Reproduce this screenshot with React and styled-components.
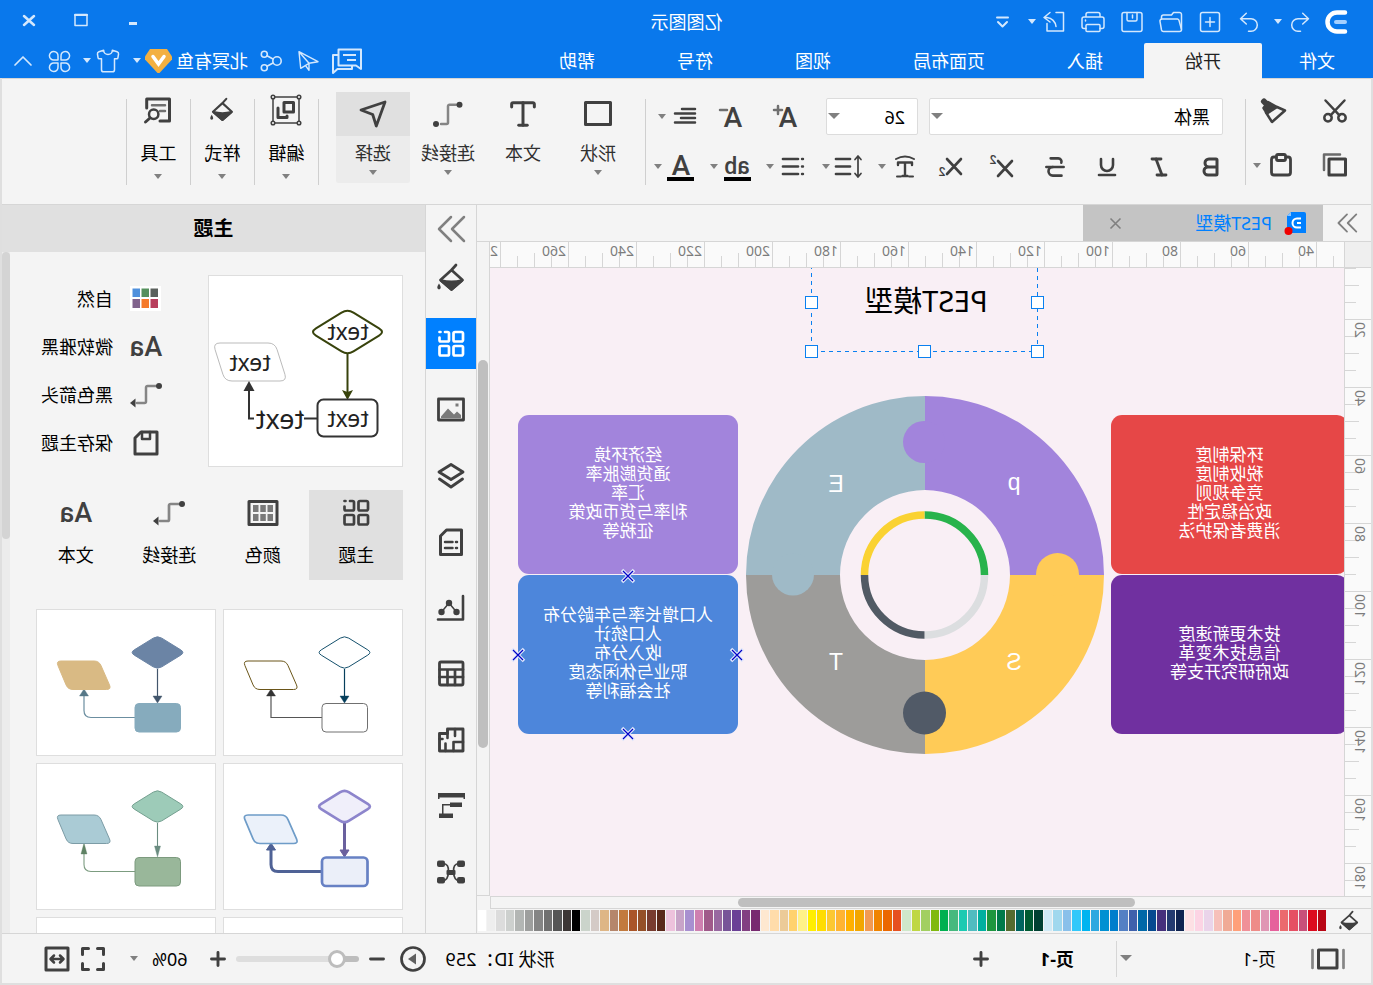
import React from "react";
import styled, { createGlobalStyle, css } from "styled-components";
import { Bold, Italic, Shirt, Strikethrough, Type, Underline } from "lucide-react";

const INK = "#404040";
const LINE = "#d6d6d6";

const GlobalStyle = createGlobalStyle`
  * { box-sizing: border-box; }
  body {
    margin: 0;
    overflow: hidden;
    font-family: "Noto Sans", "Noto Sans CJK SC", sans-serif;
    font-size: 18px;
    line-height: 26px;
    color: #000;
  }
  button, input, select { font: inherit; color: inherit; }
  button { border: 0; padding: 0; background: none; }
`;

/* The whole window is shown flipped from left to right. */
const Window = styled.div`
  display: flex;
  flex-direction: column;
  height: 100vh;
  background: #f4f4f4;
  transform: scaleX(-1);
`;

/* ---------- icons ---------- */

const Svg = styled.svg`
  display: block;
  flex: none;
  width: ${(p) => p.$w}px;
  height: ${(p) => p.$h}px;
  overflow: visible;
`;

const GlyphText = styled.text`
  font-family: ${(p) => (p.$weight ? "Roboto" : '"Liberation Sans"')}, sans-serif;
  font-size: ${(p) => p.$size}px;
  font-weight: ${(p) => p.$weight || 400};
  fill: ${(p) => p.$fill || "currentColor"};
  stroke: none;
  text-anchor: middle;
`;

const icons = {
  undo: <path d="M11.3 5.3 5.5 10.7l5.8 5.3M5.5 10.7H16a6.3 6.3 0 0 1 0 12.6h-2.5" />,
  redo: <path d="M16.7 5.3l5.8 5.4-5.8 5.3M22.5 10.7H12a6.3 6.3 0 0 0 0 12.6h2.5" />,
  add: <><rect x="4.5" y="4.5" width="19" height="19" rx="2" /><path d="M14 9.5v9M9.5 14h9" /></>,
  folder: <><path d="M3.5 21V6.5a2 2 0 0 1 2-2h6l2 2.5h8a2 2 0 0 1 2 2v2" /><path d="M7.5 11H23a2 2 0 0 1 2 2.4l-1.5 8.6a2 2 0 0 1-2 1.5h-16a2 2 0 0 1-2-2L6 12.4A2 2 0 0 1 7.5 11z" /></>,
  save: <><rect x="4" y="4.5" width="20" height="19" rx="2" /><path d="M9 4.5v7a1.5 1.5 0 0 0 1.5 1.5h7a1.5 1.5 0 0 0 1.5-1.5v-7M13.5 7v3" /></>,
  print: <><path d="M7 9V6.5a2 2 0 0 1 2-2h10a2 2 0 0 1 2 2V9M7 20.5H5a2 2 0 0 1-2-2V11a2 2 0 0 1 2-2h18a2 2 0 0 1 2 2v7.5a2 2 0 0 1-2 2h-2" /><rect x="7" y="16.5" width="14" height="7" rx="1" /><path d="M21.5 12v1" /></>,
  exportFile: <><path d="M12 4.5H4.5V23H21v-7.5" /><path d="M18 4.5l6 5-6 4.5M24 9.5h-3a10 10 0 0 0-9 9" /></>,
  more: <><path d="M9 9.5h11" strokeWidth="2" /><path d="M10 14l4.5 4.5L19 14" strokeWidth="2" /></>,
  minimize: <path d="M10 15.5h8" strokeWidth="3" strokeLinecap="butt" />,
  maximize: <><rect x="8" y="6.5" width="12" height="11" /><path d="M8 7h12" strokeWidth="2" /></>,
  close: <path d="M9 8l10 9M19 8L9 17" strokeWidth="2.5" />,
  send: <path d="M23 4.7L4 14.7l9 1.6zM23 4.7l-1.7 16.600-8.3-5M13 16.3v7l3.5-4.8" />,
  share: <><circle cx="20.7" cy="7.3" r="3" /><circle cx="20.7" cy="20.7" r="3" /><circle cx="8" cy="14" r="4.2" /><path d="M12 12l6-3.2M12 16l6 3.2" /></>,
  clover: <path d="M13 13H9a4.3 4.3 0 1 1 4-4zM16 13V9a4.3 4.3 0 1 1 4 4zM13 16H9a4.3 4.3 0 1 0 4 4zM16 16v4a4.3 4.3 0 1 0 4-4z" />,
  up: <path d="M6 18l8-8 8 8" />,
  cut: <><circle cx="7" cy="20.7" r="3.7" /><circle cx="21" cy="20.7" r="3.7" /><path d="M4.5 3.5l14 14.8M23.5 3.5l-14 14.8" /></>,
  painter: <><path d="M11 10l-8 3.5L16 25l6-9.5" /><path d="M20 5l4.500 6-3.5 5.5L11 10z" fill="currentColor" /><path d="M24 4.5l-5 5" strokeWidth="6" /></>,
  copy: <><rect x="3.5" y="8" width="16.5" height="16" strokeWidth="3" /><path d="M9 3.500h16V19" stroke="#6a6a6a" /></>,
  paste: <><rect x="4.5" y="6" width="19" height="18" rx="2.5" /><rect x="9.5" y="3.5" width="9" height="6" rx="1.5" fill="#f4f4f4" /></>,
  fontUp: <><GlyphText $size={28} $weight="500" x="12" y="24">A</GlyphText><path d="M22 3v8M18 7h8" stroke="#707070" /></>,
  fontDown: <><GlyphText $size={28} $weight="500" x="12" y="24">A</GlyphText><path d="M18 7h7" stroke="#707070" /></>,
  align: <path d="M4 6h13M4 10.500h20M4 15h14M4 19.500h20" strokeWidth="2.500" />,
  sup: <><path d="M5 8l14 15M19 8L5 23" strokeWidth="2.600" /><GlyphText $size={12} $weight="500" x="24" y="11">2</GlyphText></>,
  sub: <><path d="M4 6l14 15M18 6L4 21" strokeWidth="2.600" /><GlyphText $size={12} $weight="500" x="23" y="23">2</GlyphText></>,
  spacing: <><path d="M13 6h14M13 13.500h14M13 21h14" strokeWidth="2.700" /><path d="M5 3v21M2 6.500L5 3l3 3.500M2 20.500L5 24l3-3.500" strokeWidth="1.700" /></>,
  list: <><path d="M9 6h15M9 13.500h15M9 21h15" strokeWidth="2.700" /><path d="M4 6h1M4 13.500h1M4 21h1" strokeWidth="2.400" /></>,
  highlight: <><GlyphText $size={23} $weight="500" x="14" y="21">ab</GlyphText><path d="M0 26h27" stroke="#000" strokeWidth="4" strokeLinecap="butt" /></>,
  fontColor: <><GlyphText $size={28} $weight="500" x="14" y="22">A</GlyphText><path d="M1 26h27" stroke="#000" strokeWidth="4" strokeLinecap="butt" /></>,
  textEffect: <><path d="M5 6q9-5 18 0M6 23.500h4M18 23.500h4" /><path d="M7 12V9.500h14V12M14 9.500v13.500M11.500 23h5" strokeWidth="2.400" /></>,
  shape: <rect x="1.500" y="2.500" width="25" height="22" strokeWidth="3" />,
  connector: <><path d="M6 4.700h6.500a1.500 1.500 0 0 1 1.500 1.500v16.300a1.500 1.500 0 0 0 1.500 1.500H21" stroke="#858585" /><circle cx="2.500" cy="4.700" r="3" fill="currentColor" stroke="none" /><circle cx="26" cy="24" r="3" fill="currentColor" stroke="none" /></>,
  arrowConnector: <><path d="M4 5h8.500A1.500 1.500 0 0 1 14 6.500v14a1.500 1.500 0 0 0 1.500 1.500H23" stroke="#858585" /><circle cx="1" cy="5" r="3" fill="currentColor" stroke="none" /><path d="M24.500 17.500v9l5.500-4.500z" fill="currentColor" stroke="none" /></>,
  pointer: <path d="M26 10L2 2l8.700 24 3.600-11.500z" strokeWidth="2.800" />,
  edit: <><path d="M1 1h26v26H1z" strokeWidth="1.500" /><g fill="#f4f4f4" strokeWidth="1.500"><circle cx="1" cy="1" r="1.800" /><circle cx="27" cy="1" r="1.800" /><circle cx="1" cy="27" r="1.800" /><circle cx="27" cy="27" r="1.800" /></g><path d="M6.500 6.500H16V16H6.500zM22 12v9.500h-9V20" strokeWidth="3" /></>,
  bucket: <><path d="M9 1l4.500 5L2.500 16l11 9.500L24.500 16l-11-10" /><path d="M3 16.500q10.500 2.500 21 0l-10.500 9z" fill="currentColor" /><path d="M26 19.500q3.500 5 0 6-3.500-1 0-6z" fill="currentColor" stroke="none" /></>,
  tools: <><path d="M25.300 12V3H2.500v22h9.500" strokeWidth="3" /><path d="M7 9.300h13M7 15h5" stroke="#707070" /><circle cx="18.300" cy="18.300" r="4.700" /><path d="M22 22l4.500 4" strokeWidth="3" /></>,
  theme: <><rect x="2" y="2" width="9.500" height="9.500" rx="1.500" /><rect x="2" y="16" width="9.500" height="9.500" rx="1.500" /><rect x="16" y="16" width="9.500" height="9.500" rx="1.500" /><path d="M20 2h-2.500A1.500 1.500 0 0 0 16 3.500V10a1.500 1.500 0 0 0 1.500 1.500H24A1.500 1.500 0 0 0 25.500 10V7.500M24.500 2h1" /></>,
  image: <><rect x="1.500" y="3" width="25" height="21" strokeWidth="2.800" /><path d="M4 22v-3l4-3.500 3 3 6-6 7 8V22z" fill="#7a7a7a" stroke="none" /><path d="M6.500 7.500h3v3h-3z" fill="#7a7a7a" stroke="none" /></>,
  layers: <path d="M14 2.500L26 10l-12 7.500L2 10zM2.500 17L14 25l11.500-8" strokeWidth="2.900" />,
  doc: <><path d="M3.500 2h15l6 6v18.500h-21z" strokeWidth="3" /><path d="M8 14h1M8 20h1M12.500 14H20M12.500 20H20" strokeWidth="2.500" /></>,
  chart: <><path d="M2 2v23.500h25" strokeWidth="2.600" /><path d="M8.500 18L16 9l7.500 9" strokeWidth="1.500" /><g fill="currentColor" stroke="none"><circle cx="8.500" cy="18" r="3.200" /><circle cx="16" cy="9" r="3.200" /><circle cx="23.500" cy="18" r="3.200" /></g></>,
  table: <><rect x="2" y="2" width="23.500" height="23" rx="1.500" strokeWidth="2.800" /><path d="M2 9.500h23.500M2 17h23.500M10 9.500V25M17.500 9.500V25" /></>,
  plan: <><path d="M2 3h15.500v4.500H25.500v17.500H2z" strokeWidth="2.900" /><path d="M10 3v7M2 16h7M9 16h2.500v9M17.500 7.500V12M19.500 25v-7.500M25.500 13h-3" strokeWidth="2.600" /></>,
  gantt: <g fill="currentColor" stroke="none"><path d="M0 1h27v6h-1.500V5.500h-24V7H0z" /><rect x="3" y="10.500" width="12" height="4.500" /><rect x="12" y="21.500" width="14" height="4.500" /><path d="M15 12h8v10h-1.500v-8.500H15z" /></g>,
  mind: <><path d="M6 5.500q6 0 5.500 8.500T6 22.500M22 5.500q-6 0-5.500 8.500t5.500 8.500" strokeWidth="1.700" /><g fill="currentColor" stroke="none"><rect x="0" y="2.500" width="8" height="6.500" rx="2" /><rect x="20" y="2.500" width="8" height="6.500" rx="2" /><rect x="0" y="19" width="8" height="6.500" rx="2" /><rect x="20" y="19" width="8" height="6.500" rx="2" /><rect x="9.500" y="12" width="9" height="5" rx="1" /></g></>,
  collapse: <path d="M1 2l12 12L1 26M14 2l12 12-12 12" stroke="#808080" />,
  palette: <><rect x="0" y="2.500" width="28" height="23" strokeWidth="3" /><g fill="#7a7a7a" stroke="none"><path d="M4 6h5.500v7H4zM11.200 6h5.500v7h-5.500zM18.500 6H24v7h-5.500zM4 15h5.500v7H4zM11.200 15h5.500v7h-5.500zM18.500 15H24v7h-5.500z" /></g></>,
  swatches: <><rect x="-1" y="1" width="31" height="25" fill="#fff" stroke="none" /><g stroke="none"><path fill="#5a605c" d="M2 3.500h7.500V12H2z" /><path fill="#55905c" d="M11 3.500h7.500V12H11z" /><path fill="#4f90dc" d="M20 3.500h7.500V12H20z" /><path fill="#b83e5c" d="M2 14h7.500v9H2z" /><path fill="#f57a2a" d="M11 14h7.500v9H11z" /><path fill="#80638c" d="M20 14h7.500v9H20z" /></g></>,
  aa: <GlyphText $size={27} $weight="500" x="14" y="23">Aa</GlyphText>,
  saveTheme: <><path d="M3 3h16l6 6v16H3z" strokeWidth="3" /><path d="M10 3v7h8V3" strokeWidth="2.500" /></>,
  pages: <><rect x="5" y="5" width="18.500" height="18" strokeWidth="3" /><path d="M-1.500 5v18M29.500 5v18" stroke="#858585" strokeWidth="2.700" /></>,
  plus: <path d="M14 7.500v13M7.500 14h13" strokeWidth="2.900" />,
  minus: <path d="M7.500 14h13" strokeWidth="2.900" />,
  play: <><circle cx="14" cy="14" r="11.500" strokeWidth="2.700" /><path d="M11 8.500v11l8-5.500z" fill="#606060" stroke="none" /></>,
  full: <path d="M3.500 9.500V3.500h6M18.500 3.500h6v6M24.500 18.500v6h-6M9.500 24.500h-6v-6" strokeWidth="3" />,
  fit: <><rect x="3" y="3" width="22" height="22" strokeWidth="3" /><path d="M8 14h12M11 10.500L7.500 14l3.500 3.500M17 10.500l3.500 3.500-3.500 3.500" /></>,
};

const Icon = ({ name, size = 28, weight = 2.5 }) => (
  <Svg $w={size} $h={size} viewBox="0 0 28 28" fill="none" stroke="currentColor" strokeWidth={weight} strokeLinecap="round" strokeLinejoin="round" aria-hidden="true">
    {icons[name]}
  </Svg>
);

const Caret = styled.span`
  flex: none;
  width: 0;
  height: 0;
  border: 4px solid transparent;
  border-top: 5px solid ${(p) => p.$color || "#808080"};
  border-bottom: 0;
`;

/* ---------- header ---------- */

const Header = styled.header`
  flex: none;
  background: #0978ec;
  color: #d4e8fd;
`;
const TitleRow = styled.div`
  display: grid;
  grid-template-columns: 1fr auto 1fr;
  align-items: center;
  height: 43px;
`;
const QuickBar = styled.div`
  display: flex;
  align-items: center;
  gap: 11px;
  padding-left: 26px;
`;
const IconButton = styled.button`
  display: flex;
  align-items: center;
  justify-content: center;
  gap: ${(p) => p.$gap || 4}px;
`;
const AppTitle = styled.h1`
  margin: 0;
  font-size: 18px;
  font-weight: 400;
  color: #fff;
`;
const WindowButtons = styled.div`
  display: flex;
  justify-content: flex-end;
  padding-right: 3px;
`;
const WindowButton = styled.button`
  display: flex;
  justify-content: center;
  width: 52px;
`;
const MenuRow = styled.div`
  display: flex;
  justify-content: space-between;
  height: 35px;
`;
const Tabs = styled.nav`
  display: flex;
`;
const Tab = styled.button`
  position: relative;
  height: ${(p) => (p.$active ? 36 : 35)}px;
  padding: 0 41px;
  border-radius: 2px 2px 0 0;
  color: ${(p) => (p.$active ? "#222" : "#fff")};
  background: ${(p) => (p.$active ? "#f4f4f4" : "transparent")};
  &:first-child { padding: 0 37px 0 38px; }
`;
const Account = styled.div`
  display: flex;
  align-items: center;
  gap: 9px;
  padding-right: 9px;
`;
const SkinButton = styled(IconButton)`
  margin-left: 3px;
`;
const UserName = styled.span`
  color: #fff;
`;

const Logo = () => (
  <Svg $w={22} $h={24} viewBox="0 0 22 24" fill="none" strokeLinecap="round">
    <path d="M2 2.500h8a9.500 9.500 0 0 1 0 19H2" stroke="#fff" strokeWidth="4.500" />
    <path d="M2 12h9" stroke="#a5d0ff" strokeWidth="4" />
  </Svg>
);
const Vip = () => (
  <Svg $w={27} $h={24} viewBox="0 0 27 24">
    <path d="M5 0h17l5 7.500v3L14.500 24h-2L0 10.500v-3z" fill="#f3b041" />
    <path d="M8 7.500l5.500 7.500 5.500-7.500" fill="none" stroke="#fff" strokeWidth="3.500" strokeLinecap="round" />
  </Svg>
);
const Chat = () => (
  <Svg $w={32} $h={32} viewBox="0 0 32 32" fill="none" stroke="currentColor" strokeWidth="2" strokeLinejoin="round">
    <path d="M2 24V4.500h22.500v16H7z" />
    <path d="M24.500 10H30v18l-4.500-4H11v-3.500M7 10h13M7 15h9" />
  </Svg>
);

const quick = ["add", "folder", "save", "print"];
const menus = ["文件", "开始", "插入", "页面布局", "视图", "符号", "帮助"];

const AppHeader = () => (
  <Header>
    <TitleRow>
      <QuickBar>
        <Logo />
        <IconButton aria-label="undo"><Icon name="undo" weight={1.5} /><Caret $color="#d4e8fd" /></IconButton>
        <IconButton aria-label="redo"><Icon name="redo" weight={1.5} /></IconButton>
        {quick.map((n) => <IconButton key={n} aria-label={n}><Icon name={n} weight={1.5} /></IconButton>)}
        <IconButton aria-label="export"><Icon name="exportFile" weight={1.5} /><Caret $color="#d4e8fd" /></IconButton>
        <IconButton aria-label="more"><Icon name="more" /></IconButton>
      </QuickBar>
      <AppTitle>亿图图示</AppTitle>
      <WindowButtons>
        <WindowButton aria-label="minimize"><Icon name="minimize" /></WindowButton>
        <WindowButton aria-label="maximize"><Icon name="maximize" weight={1.5} /></WindowButton>
        <WindowButton aria-label="close"><Icon name="close" /></WindowButton>
      </WindowButtons>
    </TitleRow>
    <MenuRow>
      <Tabs>
        {menus.map((m) => <Tab key={m} $active={m === "开始"}>{m}</Tab>)}
      </Tabs>
      <Account>
        <IconButton aria-label="comments"><Chat /></IconButton>
        <IconButton aria-label="send"><Icon name="send" weight={1.4} /></IconButton>
        <IconButton aria-label="share"><Icon name="share" weight={1.6} /></IconButton>
        <IconButton><UserName>北冥有鱼</UserName><Vip /><Caret $color="#d4e8fd" /></IconButton>
        <SkinButton aria-label="skin"><Shirt size={26} strokeWidth={1.4} /><Caret $color="#d4e8fd" /></SkinButton>
        <IconButton aria-label="apps"><Icon name="clover" weight={1.5} /></IconButton>
        <IconButton aria-label="collapse"><Icon name="up" weight={1.7} /></IconButton>
      </Account>
    </MenuRow>
  </Header>
);

/* ---------- ribbon ---------- */

const Body = styled.div`
  flex: 1;
  min-height: 0;
  display: flex;
  flex-direction: column;
  border: solid #dfdfdf;
  border-width: 0 2px 2px;
`;
const RibbonBar = styled.section`
  flex: none;
  display: flex;
  height: 127px;
  border-top: 1px solid ${LINE};
  border-bottom: 1px solid ${LINE};
  color: ${INK};
`;
const Separator = styled.div`
  flex: none;
  width: 1px;
  height: 86px;
  margin-top: 20px;
  background: #cfcfcf;
`;
const Clipboard = styled.div`
  display: grid;
  grid-template-columns: 66px 56px;
  grid-auto-rows: 54px;
  padding: 5px 0 0 3px;
`;
const FontGroup = styled.div`
  display: flex;
  flex-direction: column;
  gap: 13px;
  padding: 19px 8px 0;
`;
const FontRow = styled.div`
  display: flex;
  align-items: center;
  height: 37px;
  padding-left: ${(p) => p.$inset || 0}px;
`;
const SelectBox = styled.label`
  position: relative;
  display: block;
  width: ${(p) => p.$width}px;
  margin-right: 11px;
  select {
    appearance: none;
    display: block;
    width: 100%;
    height: 37px;
    padding: 0 12px;
    border: 1px solid #dcdcdc;
    border-radius: 2px;
    background: #fff;
    color: #000;
  }
  ${Caret} {
    position: absolute;
    right: 2px;
    top: 15px;
    border-width: 6px 6px 0;
  }
`;
const Tool = styled(IconButton)`
  width: ${(p) => p.$width}px;
`;
const Combos = styled.div`
  display: flex;
  gap: 14px;
  padding-left: 5px;
`;
const Combo = styled(IconButton)`
  width: 42px;
  gap: 5px;
`;
const BigTools = styled.div`
  display: flex;
  gap: 1px;
  padding: 13px 17px 0 10px;
`;
const BigTool = styled.button`
  display: flex;
  flex-direction: column;
  align-items: center;
  gap: ${(p) => (p.$menu ? 8 : 4)}px;
  width: ${(p) => p.$width || 74}px;
  height: 91px;
  margin-top: ${(p) => (p.$menu ? 9 : 0)}px;
  border-radius: 2px;
  background: ${(p) => (p.$active ? "#ececec" : "transparent")};
`;
const BigIcon = styled.span`
  display: flex;
  align-items: center;
  justify-content: center;
  align-self: stretch;
  height: 44px;
  background: ${(p) => (p.$active ? "#e0e0e0" : "transparent")};
`;
const BigLabel = styled.span`
  color: ${(p) => (p.$dark ? "#000" : "#303030")};
`;

const Ribbon = () => (
  <RibbonBar>
    <Clipboard>
      <IconButton aria-label="cut"><Icon name="cut" /></IconButton>
      <IconButton aria-label="format painter"><Icon name="painter" /></IconButton>
      <IconButton aria-label="copy"><Icon name="copy" /></IconButton>
      <IconButton aria-label="paste" $gap={6}><Icon name="paste" weight={2.8} /><Caret /></IconButton>
    </Clipboard>
    <Separator />
    <FontGroup>
      <FontRow $inset={14}>
        <SelectBox $width={294}><select aria-label="font"><option>黑体</option></select><Caret /></SelectBox>
        <SelectBox $width={92}><select aria-label="size"><option>26</option></select><Caret /></SelectBox>
        <Tool $width={58} aria-label="grow font"><Icon name="fontUp" /></Tool>
        <Tool $width={52} aria-label="shrink font"><Icon name="fontDown" /></Tool>
        <Combos><Combo aria-label="align"><Icon name="align" /><Caret /></Combo></Combos>
      </FontRow>
      <FontRow>
        <Tool $width={52} aria-label="bold"><Bold size={24} strokeWidth={3} /></Tool>
        <Tool $width={52} aria-label="italic"><Italic size={24} strokeWidth={2.8} /></Tool>
        <Tool $width={52} aria-label="underline"><Underline size={24} strokeWidth={2.6} /></Tool>
        <Tool $width={52} aria-label="strike"><Strikethrough size={26} strokeWidth={2.4} /></Tool>
        <Tool $width={52} aria-label="superscript"><Icon name="sup" /></Tool>
        <Tool $width={52} aria-label="subscript"><Icon name="sub" /></Tool>
        <Combos>
          {["textEffect", "spacing", "list", "highlight", "fontColor"].map((n) => (
            <Combo key={n} aria-label={n}><Icon name={n} weight={2} /><Caret /></Combo>
          ))}
        </Combos>
      </FontRow>
    </FontGroup>
    <Separator />
    <BigTools>
      <BigTool><BigIcon><Icon name="shape" /></BigIcon><BigLabel>形状</BigLabel><Caret /></BigTool>
      <BigTool><BigIcon><Type size={34} strokeWidth={2.1} /></BigIcon><BigLabel>文本</BigLabel></BigTool>
      <BigTool><BigIcon><Icon name="connector" /></BigIcon><BigLabel>连接线</BigLabel><Caret /></BigTool>
      <BigTool $active><BigIcon $active><Icon name="pointer" /></BigIcon><BigLabel>选择</BigLabel><Caret /></BigTool>
    </BigTools>
    {[["edit", "编辑"], ["bucket", "样式"], ["tools", "工具"]].map(([icon, label]) => (
      <React.Fragment key={label}>
        {label !== "编辑" || <Separator />}
        <BigTool $menu $width={63}><BigIcon><Icon name={icon} size={icon === "bucket" ? 24 : 28} /></BigIcon><BigLabel $dark>{label}</BigLabel><Caret /></BigTool>
        <Separator />
      </React.Fragment>
    ))}
  </RibbonBar>
);

/* ---------- editor ---------- */

const Main = styled.main`
  flex: 1;
  min-height: 0;
  display: flex;
`;
const Editor = styled.section`
  flex: 1;
  min-width: 0;
  display: flex;
  flex-direction: column;
`;
const DocTabs = styled.div`
  flex: none;
  display: flex;
  align-items: center;
  height: 37px;
  border-bottom: 1px solid ${LINE};
  color: ${INK};
`;
const Expand = styled.button`
  display: flex;
  justify-content: center;
  width: 48px;
`;
const DocTab = styled.div`
  display: flex;
  align-items: center;
  gap: 14px;
  width: 240px;
  height: 36px;
  padding: 0 27px 0 17px;
  background: #c4c4c4;
  color: #0080ff;
  button { margin-left: auto; color: #808080; }
`;
const Board = styled.div`
  flex: 1;
  min-height: 0;
  display: grid;
  grid-template-columns: 27px 1fr 13px;
  grid-template-rows: 26px 1fr 13px;
`;
const Corner = styled.div`
  background: #efefef;
  border: solid ${LINE};
  border-width: 0 1px 1px 0;
`;
const Ruler = styled.div`
  display: flex;
  overflow: hidden;
  background: #fafafa;
  border: 0 solid ${LINE};
  ${(p) => p.$vertical
    ? css`flex-direction: column; border-right-width: 1px;`
    : css`border-bottom-width: 1px;`}
`;
const Segment = styled.div`
  flex: none;
  position: relative;
  display: flex;
  border: 0 solid ${LINE};
  ${(p) => p.$vertical
    ? css`
      height: 68px;
      flex-direction: column;
      justify-content: space-evenly;
      align-items: flex-end;
      border-top-width: 1px;
      &:first-child { margin-top: -17px; }
    `
    : css`
      width: 68px;
      justify-content: space-evenly;
      align-items: flex-end;
      border-left-width: 1px;
      &:first-child { margin-left: -41px; }
    `}
`;
const Tick = styled.i`
  background: ${LINE};
  width: ${(p) => (p.$vertical ? (p.$long ? 14 : 11) : 1)}px;
  height: ${(p) => (p.$vertical ? 1 : p.$long ? 14 : 11)}px;
`;
const Mark = styled.span`
  position: absolute;
  font-size: 14px;
  line-height: 16px;
  color: #7c7c7c;
  ${(p) => p.$vertical
    ? css`top: 2px; left: 3px; writing-mode: vertical-rl; transform: rotate(180deg);`
    : css`top: 1px; left: 2px;`}
`;
/* The first segment only carries ticks: its number lies outside the view. */
const Scale = ({ vertical, from, count }) => (
  <Ruler $vertical={vertical}>
    {Array.from({ length: count }, (_, i) => (
      <Segment key={i} $vertical={vertical}>
        {i > 0 && <Mark $vertical={vertical}>{from + i * 20}</Mark>}
        <Tick $vertical={vertical} /><Tick $vertical={vertical} $long /><Tick $vertical={vertical} />
      </Segment>
    ))}
  </Ruler>
);
const VScroll = styled.div`
  grid-column: 3;
  grid-row: 1 / 3;
  padding: 118px 1px 0;
  border: solid ${LINE};
  border-width: 0 0 1px 1px;
`;
const HScroll = styled.div`
  grid-column: 1 / 3;
  padding: 1px 0 0 236px;
  border: solid ${LINE};
  border-width: 1px 1px 1px 0;
`;
const Thumb = styled.div`
  width: ${(p) => p.$w}px;
  height: ${(p) => p.$h}px;
  border-radius: 5px;
  background: ${(p) => p.$color || "#bfbfbf"};
`;
const Canvas = styled.div`
  position: relative;
  overflow: hidden;
  background: #f9eff5;
`;
const Card = styled.p`
  position: absolute;
  left: ${(p) => p.$x}px;
  top: ${(p) => p.$y}px;
  width: ${(p) => p.$w}px;
  height: 159px;
  margin: 0;
  padding-bottom: 4px;
  display: flex;
  align-items: center;
  justify-content: center;
  text-align: center;
  white-space: pre-line;
  border-radius: 11px;
  background: ${(p) => p.$color};
  color: #fff;
  font-size: 17px;
  line-height: 19px;
`;
const Drawing = styled.svg`
  position: absolute;
  left: ${(p) => p.$x}px;
  top: ${(p) => p.$y}px;
  overflow: visible;
`;
const CanvasTitle = styled.h2`
  position: absolute;
  left: 306px;
  top: 11px;
  width: 224px;
  margin: 0;
  text-align: center;
  font-size: 29px;
  line-height: 44px;
  font-weight: 400;
`;

const cards = [
  { x: -4, y: 147, w: 237, color: "#e64747", text: "环保制度\n税收制度\n竞争规则\n政治稳定性\n消费者保护法" },
  { x: -4, y: 307, w: 237, color: "#7030a0", text: "技术更新速度\n信息技术变革\n政府研究开支等" },
  { x: 606, y: 147, w: 220, color: "#a284dc", text: "经济环境\n通货膨胀率\n汇率\n利率与货币政策\n征税等" },
  { x: 606, y: 307, w: 220, color: "#4d86db", text: "人口增长率与年龄分布\n人口统计\n收入分布\n职业与休闲态度\n社会福利等" },
];

const Donut = () => (
  <Drawing $x={240} $y={128} width="358" height="358" viewBox="0 0 358 358">
    <path d="M179 0A179 179 0 0 0 0 179h94a85 85 0 0 1 85-85z" fill="#a284dc" />
    <path d="M179 0a179 179 0 0 1 179 179h-94a85 85 0 0 0-85-85z" fill="#9fbac7" />
    <path d="M0 179a179 179 0 0 0 179 179v-94a85 85 0 0 1-85-85z" fill="#ffcb57" />
    <path d="M358 179a179 179 0 0 1-179 179v-94a85 85 0 0 0 85-85z" fill="#9d9c9a" />
    <circle cx="180" cy="46" r="21" fill="#a284dc" />
    <circle cx="46.500" cy="178.500" r="21.500" fill="#ffcb57" />
    <circle cx="311" cy="178.500" r="21" fill="#9fbac7" />
    <circle cx="179.500" cy="317" r="21.500" fill="#515a67" />
    <g fill="none" strokeWidth="7.500">
      <path d="M179.500 119a60 60 0 0 0-60 60" stroke="#28b34c" />
      <path d="M179.500 119a60 60 0 0 1 60 60" stroke="#fad232" />
      <path d="M119.500 179a60 60 0 0 0 60 60" stroke="#dcdee0" />
      <path d="M239.500 179a60 60 0 0 1-60 60" stroke="#515a64" />
    </g>
    <GlyphText $size={23} $fill="#fff" x="90" y="94">p</GlyphText>
    <GlyphText $size={23} $fill="#fff" x="268" y="96">E</GlyphText>
    <GlyphText $size={23} $fill="#fff" x="90" y="274">S</GlyphText>
    <GlyphText $size={23} $fill="#fff" x="268" y="274">T</GlyphText>
  </Drawing>
);

const handles = [[0.5, 34.5], [226.5, 34.5], [0.5, 83.5], [113.5, 83.5], [226.5, 83.5]];
const Selection = () => (
  <Drawing $x={306} $y={0} width="228" height="92" viewBox="0 0 228 92" fill="none" stroke="#0a80f0">
    <path d="M.5 0v83.500h226V0" strokeDasharray="4 4" />
    {handles.map(([x, y]) => <rect key={`${x}-${y}`} x={x - 6} y={y - 6} width="12" height="12" fill="#fff" />)}
  </Drawing>
);

const anchors = [[110, 1], [1, 80], [220, 80], [110, 159]];
const Anchors = () => (
  <Drawing $x={606} $y={307} width="220" height="160" viewBox="0 0 220 160">
    {anchors.map(([x, y]) => (
      <g key={`${x}-${y}`}>
        <path d={`M${x - 6} ${y - 6}l12 12M${x + 6} ${y - 6}l-12 12`} stroke="#dfe6fb" strokeWidth="3.500" />
        <path d={`M${x - 5} ${y - 5}l10 10M${x + 5} ${y - 5}l-10 10`} stroke="#0000c8" strokeWidth="1.200" />
      </g>
    ))}
  </Drawing>
);

const swatchColors = (
  "b80514 dc0a1e c8507a e65064 eb6a6e e6609c e096b4 ee8c88 f09098 ffa07a f0aa96 f6c0ba ead4ea fcd4e4 fde0e4 " +
  "0f2350 233a70 46307c 064a90 0068a8 3f60ac 5480c4 007ecc 0090d2 2ca8e0 00b4f0 32c8fa 8ac0ea a0d8ee d0eaf6 " +
  "004032 005a32 00645f 556b2f 007a4a 1e963f 00b0a0 50bcc0 1ccab2 46b97e 00b050 80b90f a2cf60 bfd744 cfe8ca " +
  "e65020 eb6800 f08400 f29a52 f2a600 ffb000 ffb432 fcc832 ffdc00 ffee00 fff288 ffd26e eccb98 ffdcaa fee8d0 " +
  "782a70 824082 6a4096 785498 9868a0 a05a8a cf80b0 a890d0 c8a4c8 edc2dc 5a281a 783c30 955028 aa5528 c27a3e " +
  "b5866c deb686 d4cac6 cbd4cb 000000 3c3635 555555 707070 858585 9e9f9e b3b6b4 cdd0ce dcdcdc eeeeee ffffff"
).split(" ");

const PaletteBar = styled.div`
  flex: none;
  display: flex;
  align-items: center;
  height: 24px;
  padding-left: 12px;
  color: ${INK};
`;
const SwatchRow = styled.div`
  flex: 1;
  display: flex;
  gap: 1px;
  height: 21px;
  margin: 0 1px 2px 13px;
`;
const Swatch = styled.button`
  flex: 1;
  background: ${(p) => p.$color};
`;

const DocIcon = () => (
  <Svg $w={20} $h={22} viewBox="0 0 20 22">
    <path d="M2 0h13l4 4v17H0V2q0-2 2-2z" fill="#0080ff" />
    <path d="M15 0l4 4h-4z" fill="#8cc4ff" />
    <path d="M5 6.500h4a4.500 4.500 0 0 1 0 9H5M5 11h4" fill="none" stroke="#fff" strokeWidth="2" />
    <circle cx="17.500" cy="19" r="4" fill="#f00000" />
  </Svg>
);

const EditorArea = () => (
  <Editor>
    <DocTabs>
      <Expand aria-label="expand"><Icon name="collapse" size={20} /></Expand>
      <DocTab>
        <DocIcon />
        <span>PEST模型</span>
        <button aria-label="close tab">
          <Svg $w={11} $h={11} viewBox="0 0 11 11" stroke="currentColor" strokeWidth="1.600"><path d="M.5.5l10 10M10.500.5l-10 10" /></Svg>
        </button>
      </DocTab>
    </DocTabs>
    <Board>
      <Corner />
      <Scale from={20} count={14} />
      <VScroll><Thumb $w={10} $h={388} /></VScroll>
      <Scale vertical from={0} count={10} />
      <Canvas>
        {cards.map((c) => (
          <Card key={c.color} $x={c.x} $y={c.y} $w={c.w} $color={c.color}>{c.text}</Card>
        ))}
        <Donut />
        <CanvasTitle>PEST模型</CanvasTitle>
        <Selection />
        <Anchors />
      </Canvas>
      <HScroll><Thumb $w={397} $h={9} /></HScroll>
    </Board>
    <PaletteBar>
      <Icon name="bucket" size={20} />
      <SwatchRow>
        {swatchColors.map((c, i) => <Swatch key={i} $color={`#${c}`} aria-label={`#${c}`} />)}
      </SwatchRow>
    </PaletteBar>
  </Editor>
);

/* ---------- side rail and theme panel ---------- */

const Rail = styled.nav`
  flex: none;
  display: flex;
  flex-direction: column;
  gap: 15px;
  width: 52px;
  border: solid ${LINE};
  border-width: 0 1px;
  overflow: hidden;
`;
const RailButton = styled.button`
  flex: none;
  display: flex;
  align-items: center;
  justify-content: center;
  height: ${(p) => (p.$small ? 47 : 51)}px;
  margin-bottom: ${(p) => (p.$small ? -15 : 0)}px;
  color: ${(p) => (p.$active ? "#fff" : INK)};
  background: ${(p) => (p.$active ? "#0080ff" : "transparent")};
`;
const Panel = styled.aside`
  flex: none;
  display: flex;
  flex-direction: column;
  width: 423px;
`;
const PanelTitle = styled.h2`
  flex: none;
  margin: 0;
  padding-top: 1px;
  font-size: 20px;
  font-weight: 700;
  line-height: 46px;
  text-align: center;
  background: #e0e0e0;
`;
const PanelBody = styled.div`
  flex: 1;
  min-height: 0;
  display: flex;
`;
const PanelContent = styled.div`
  flex: 1;
  overflow: hidden;
  padding: 23px 19px 0 22px;
  color: ${INK};
`;
const PanelTrack = styled.div`
  width: 8px;
  background: #ececec;
`;
const Current = styled.div`
  display: flex;
  gap: 48px;
`;
const Frame = styled.div`
  flex: none;
  width: ${(p) => p.$w}px;
  height: ${(p) => p.$h}px;
  background: #fff;
  border: 1px solid #dedede;
  svg { margin: -1px; }
`;
const Options = styled.div`
  display: grid;
  grid-auto-rows: 48px;
`;
const Option = styled.button`
  display: flex;
  align-items: center;
  gap: 19px;
  color: ${INK};
  span { color: #000; }
`;
const KindTabs = styled.div`
  display: grid;
  grid-template-columns: repeat(4, 1fr);
  margin: 23px 0 29px;
`;
const KindTab = styled.button`
  display: flex;
  flex-direction: column;
  align-items: center;
  gap: 15px;
  height: 90px;
  padding-top: 9px;
  background: ${(p) => (p.$active ? "#e0e0e0" : "transparent")};
  span { color: #000; }
`;
const Themes = styled.div`
  display: flex;
  flex-wrap: wrap;
  gap: 7px;
`;

/* Closed path through the points, each corner rounded by r. */
const roundedPath = (pts, r) => {
  const n = pts.length;
  const toward = (a, b) => {
    const d = Math.hypot(b[0] - a[0], b[1] - a[1]);
    return [a[0] + ((b[0] - a[0]) * r) / d, a[1] + ((b[1] - a[1]) * r) / d];
  };
  return pts.map((p, i) => {
    const a = toward(p, pts[(i + n - 1) % n]);
    const b = toward(p, pts[(i + 1) % n]);
    return `${i ? "L" : "M"}${a}Q${p} ${b}`;
  }).join("") + "Z";
};

const SampleText = styled.text`
  font-family: "Noto Sans", sans-serif;
  font-size: ${(p) => p.$size || 23}px;
  fill: #222;
  text-anchor: middle;
`;

const Preview = () => (
  <Svg $w={195} $h={192} viewBox="0 0 195 192" fill="none">
    <path d={roundedPath([[18, 57], [55.5, 34], [93, 57], [55.5, 80]], 7)} stroke="#38430c" strokeWidth="2" />
    <path d="M55.500 79v38" stroke="#38430c" strokeWidth="2" />
    <path d="M50 115l5.500 2 5.500-2-5.500 10z" fill="#38430c" />
    <path d={roundedPath([[190, 68], [128, 68], [116, 106], [178, 106]], 7)} stroke="#bbb" />
    <rect x="25.500" y="124.500" width="60" height="37" rx="6" stroke="#333" strokeWidth="2" />
    <path d="M86 143.500h13M149 143.500h5V114" stroke="#333" strokeWidth="2" />
    <path d="M148.500 116l5.500-10 5.500 10z" fill="#333" />
    <SampleText x="55" y="65">text</SampleText>
    <SampleText x="153" y="96">text</SampleText>
    <SampleText x="55" y="152">text</SampleText>
    <SampleText $size={27} x="123" y="154">text</SampleText>
  </Svg>
);

const ThemeSample = ({ t }) => (
  <Svg $w={180} $h={147} viewBox="0 0 180 147" fill="none">
    <path d={t.sharp ? "M81 108.500h51V84" : "M81 108.500h44q7 0 7-7V84"} stroke={t.link} strokeWidth={t.lw} />
    <path d={t.thin ? "M129 91l3-11 3 11z" : "M127.500 87l4.500-7 4.500 7z"} fill={t.link2} stroke={t.link2} strokeWidth={t.lw / 3} />
    <path d="M58.500 60v28" stroke={t.down} strokeWidth={t.lw} />
    <path d={t.thin ? "M55.500 83h6l-3 11z" : "M54 87h9l-4.500 7z"} fill={t.down} stroke={t.down} strokeWidth={t.lw / 3} />
    <path d={roundedPath([[31, 43.5], [58.5, 26.5], [86, 43.5], [58.5, 60.5]], 5)} fill={t.a[0]} stroke={t.a[1]} strokeWidth={t.w} />
    <path d={roundedPath([[160, 52], [117, 52], [104.5, 80.5], [148, 80.5]], 5)} fill={t.b[0]} stroke={t.b[1]} strokeWidth={t.pw || t.w} />
    <rect x="35.500" y="94.500" width="45.500" height="28.500" rx="4" fill={t.c[0]} stroke={t.c[1]} strokeWidth={t.w} />
  </Svg>
);

const themes = [
  { a: ["#fff", "#14506c"], b: ["#fff", "#6a5518"], c: ["#fff", "#707070"], link: "#555", link2: "#333", down: "#063f5c", w: 1, lw: 1.2, sharp: true },
  { a: ["#6b84a5", "#6b84a5"], b: ["#d9ba84", "#d9ba84"], c: ["#86abbd", "#86abbd"], link: "#6b8ea0", link2: "#567888", down: "#42566c", w: 1, lw: 1.2 },
  { a: ["#f0effa", "#8d85cc"], b: ["#ebf1fa", "#6e9cc8"], c: ["#ebeff9", "#6781c4"], link: "#4f6296", link2: "#4f6296", down: "#6a609e", w: 2.7, pw: 1.7, lw: 3 },
  { a: ["#9dcbb8", "#74a090"], b: ["#aacbd5", "#7c9ca6"], c: ["#99b79a", "#7c9a7e"], link: "#7c9c80", link2: "#5f8264", down: "#6a8c80", w: 1, lw: 1.1, thin: true },
];

const SidePanel = () => (
  <Panel>
    <PanelTitle>主题</PanelTitle>
    <PanelBody>
      <PanelContent>
        <Current>
          <Frame $w={195} $h={192}><Preview /></Frame>
          <Options>
            {[["swatches", "自然"], ["aa", "微软雅黑"], ["arrowConnector", "黑色箭头"], ["saveTheme", "保存主题"]].map(([icon, label]) => (
              <Option key={label}><Icon name={icon} /><span>{label}</span></Option>
            ))}
          </Options>
        </Current>
        <KindTabs>
          {[["theme", "主题"], ["palette", "颜色"], ["arrowConnector", "连接线"], ["aa", "文本"]].map(([icon, label]) => (
            <KindTab key={label} $active={label === "主题"}><Icon name={icon} weight={2.7} /><span>{label}</span></KindTab>
          ))}
        </KindTabs>
        <Themes>
          {themes.map((t, i) => <Frame key={i} $w={180} $h={147}><ThemeSample t={t} /></Frame>)}
          <Frame $w={180} $h={147} />
          <Frame $w={180} $h={147} />
        </Themes>
      </PanelContent>
      <PanelTrack><Thumb $w={8} $h={287} $color="#d4d4d4" /></PanelTrack>
    </PanelBody>
  </Panel>
);

/* ---------- status bar ---------- */

const Status = styled.footer`
  flex: none;
  display: flex;
  align-items: center;
  height: 50px;
  border-top: 1px solid ${LINE};
  color: ${INK};
`;
const StatusLeft = styled.div`
  flex: 1;
  display: flex;
  align-items: center;
  padding-left: 29px;
`;
const PageSelect = styled(SelectBox)`
  margin: 0 1px 0 28px;
  select {
    border: 0;
    background: transparent;
    padding: 0 10px;
  }
`;
const Divider = styled.div`
  width: 1px;
  height: 36px;
  background: ${LINE};
`;
const CurrentPage = styled.button`
  margin: 0 45px 0 42px;
  font-weight: 700;
  color: #000;
`;
const StatusRight = styled.div`
  display: flex;
  align-items: center;
  gap: 8px;
  padding-right: 41px;
`;
const StatusText = styled.span`
  margin-right: 11px;
  color: #000;
`;
const ZoomControl = styled.div`
  display: flex;
  align-items: center;
  gap: 4px;
`;
const Zoom = styled.input`
  appearance: none;
  width: 123px;
  height: 18px;
  margin: 0;
  background: transparent;
  &::-webkit-slider-runnable-track {
    height: 6px;
    border-radius: 3px;
    background: linear-gradient(to right, #bdbdbd 18%, #dedede 18%);
  }
  &::-webkit-slider-thumb {
    appearance: none;
    width: 18px;
    height: 18px;
    margin-top: -6px;
    border: 3px solid #bdbdbd;
    border-radius: 50%;
    background: #fff;
  }
`;
const ZoomLevel = styled(IconButton)`
  margin: 0 15px 0 8px;
  color: #000;
`;

const StatusBar = () => (
  <Status>
    <StatusLeft>
      <IconButton aria-label="pages"><Icon name="pages" /></IconButton>
      <PageSelect $width={168}><select aria-label="page"><option>页-1</option></select><Caret /></PageSelect>
      <Divider />
      <CurrentPage>页-1</CurrentPage>
      <IconButton aria-label="add page"><Icon name="plus" /></IconButton>
    </StatusLeft>
    <StatusRight>
      <StatusText>形状 ID：259</StatusText>
      <IconButton aria-label="play"><Icon name="play" /></IconButton>
      <ZoomControl>
        <IconButton aria-label="zoom out"><Icon name="minus" /></IconButton>
        <Zoom type="range" aria-label="zoom" min="0" max="100" defaultValue="12" />
        <IconButton aria-label="zoom in"><Icon name="plus" /></IconButton>
      </ZoomControl>
      <ZoomLevel $gap={14}>60%<Caret /></ZoomLevel>
      <IconButton aria-label="full screen"><Icon name="full" /></IconButton>
      <IconButton aria-label="fit width"><Icon name="fit" /></IconButton>
    </StatusRight>
  </Status>
);

export default function App() {
  return (
    <>
      <GlobalStyle />
      <Window>
        <AppHeader />
        <Body>
          <Ribbon />
          <Main>
            <EditorArea />
            <Rail>
              <RailButton $small aria-label="collapse"><Icon name="collapse" /></RailButton>
              {["bucket", "theme", "image", "layers", "doc", "chart", "table", "plan", "gantt", "mind"].map((n) => (
                <RailButton key={n} $active={n === "theme"} aria-label={n}><Icon name={n} weight={2.7} /></RailButton>
              ))}
            </Rail>
            <SidePanel />
          </Main>
          <StatusBar />
        </Body>
      </Window>
    </>
  );
}
